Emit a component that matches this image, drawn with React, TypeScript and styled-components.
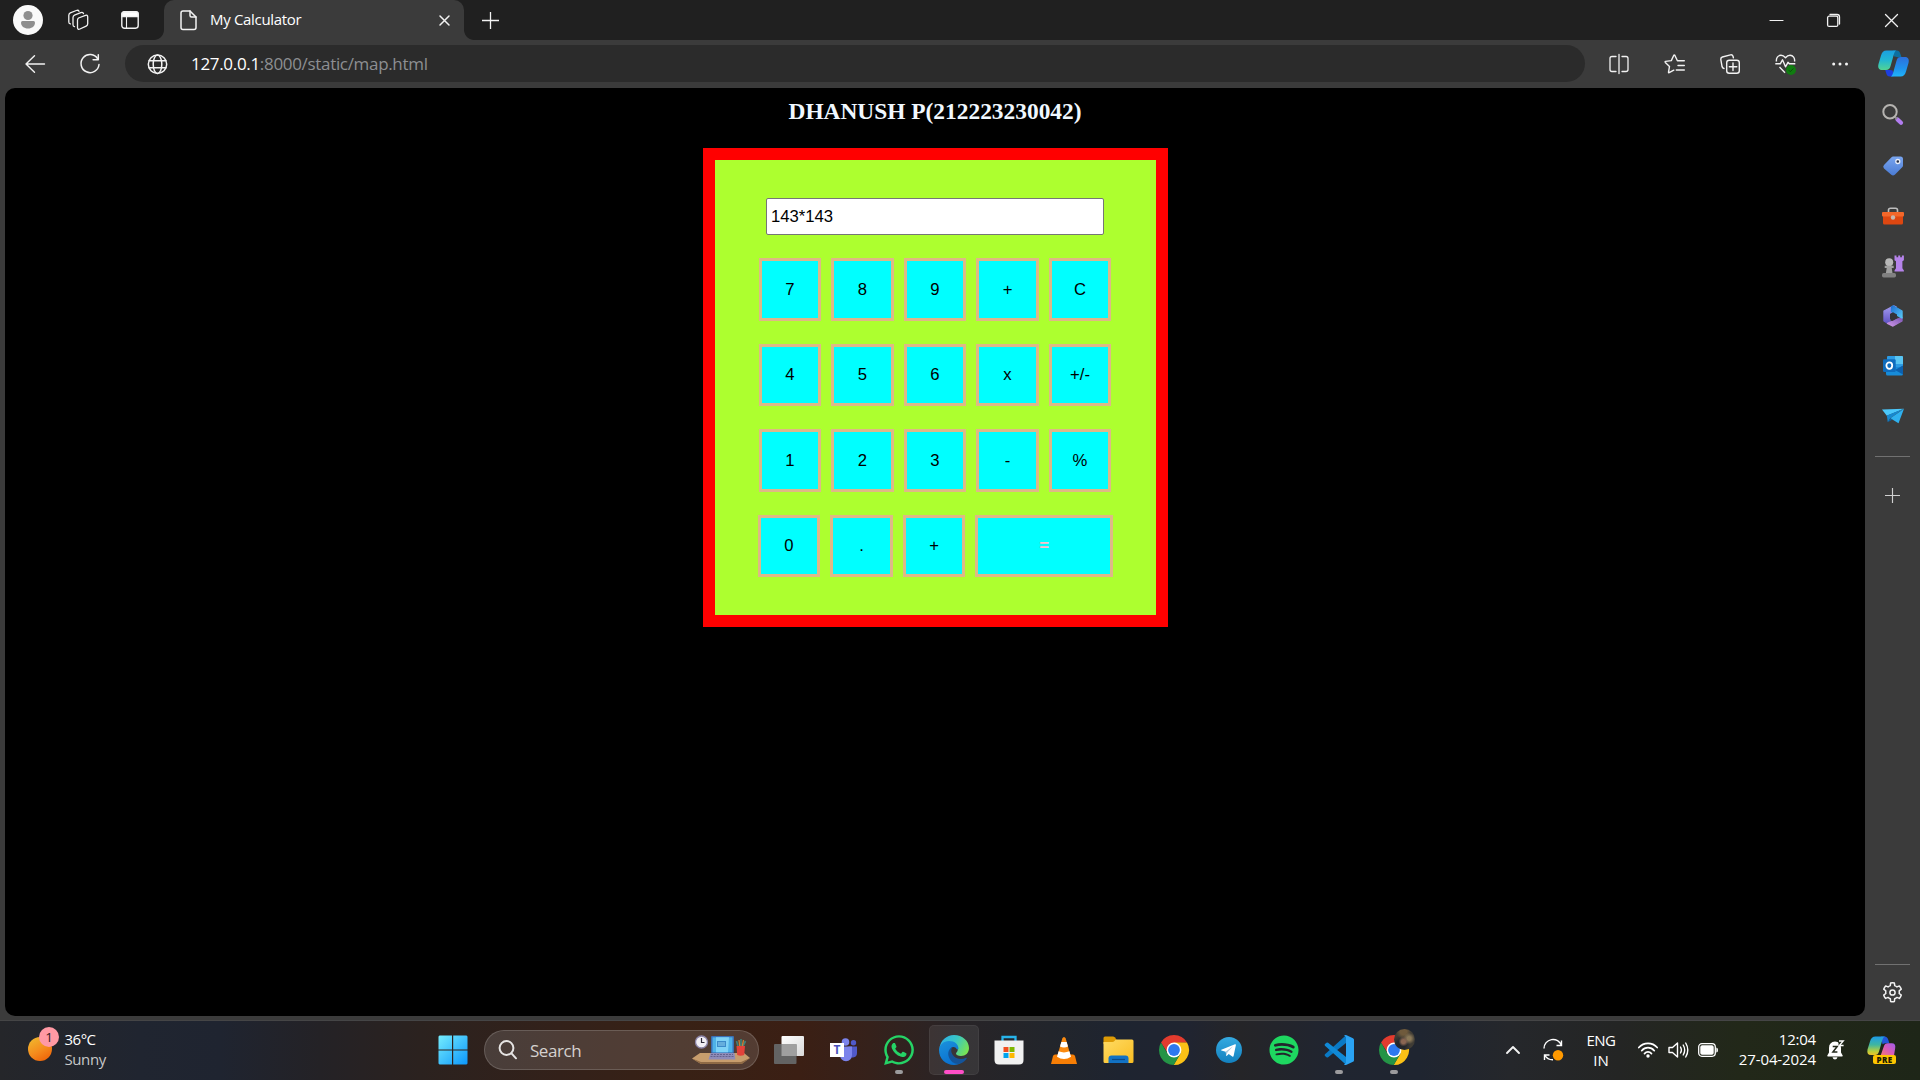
import React from 'react';
import styled, { createGlobalStyle } from 'styled-components';
import { FaWhatsapp, FaSpotify } from 'react-icons/fa';

const GlobalStyle = createGlobalStyle`
  *, *::before, *::after { box-sizing: border-box; }
  html, body { margin: 0; padding: 0; background: #3b3b3b; overflow: hidden; }
  svg { display: block; flex: none; overflow: visible; }
`;

const uiFont = `"Open Sans", "Noto Sans", sans-serif`;

/* ---------- window frame ---------- */

const Desktop = styled.div`
  display: flex;
  flex-direction: column;
  width: 1920px;
  height: 1080px;
  overflow: hidden;
  background: #3b3b3b;
  color: #fff;
  font-family: ${uiFont};
`;

const TitleBar = styled.header`
  display: flex;
  height: 40px;
  flex: none;
  background: #202020;
`;

const Slot = styled.div<{ $w: number; $shift?: number }>`
  display: flex;
  align-items: center;
  justify-content: center;
  flex: none;
  width: ${(p) => p.$w}px;
  height: 100%;
  padding-top: ${(p) => p.$shift ?? 0}px;
`;

const Tab = styled.div`
  position: relative;
  display: flex;
  align-items: center;
  width: 300px;
  height: 40px;
  margin-left: 3px;
  padding: 0 14px 0 16px;
  border-radius: 10px 10px 0 0;
  background: #3b3b3b;

  &::before,
  &::after {
    content: '';
    position: absolute;
    bottom: 0;
    width: 10px;
    height: 10px;
  }
  &::before {
    left: -10px;
    background: radial-gradient(circle at 0 0, #202020 9.5px, #3b3b3b 10.3px);
  }
  &::after {
    right: -10px;
    background: radial-gradient(circle at 100% 0, #202020 9.5px, #3b3b3b 10.3px);
  }
`;

const TabTitle = styled.span`
  flex: 1;
  margin-left: 13px;
  padding-bottom: 2px;
  font-size: 15px;
  line-height: 20px;
  letter-spacing: -0.32px;
`;

const Spacer = styled.div`
  flex: 1;
`;

const Toolbar = styled.div`
  display: flex;
  align-items: center;
  flex: none;
  height: 48px;
  padding-bottom: 1px;
`;

const AddressBar = styled.div`
  display: flex;
  align-items: center;
  width: 1460px;
  height: 37px;
  margin-right: 6px;
  padding-left: 22px;
  border-radius: 19px;
  background: #2b2b2b;
`;

const Url = styled.span`
  margin-left: 24px;
  font-size: 17px;
  line-height: 24px;
  letter-spacing: -0.32px;
  color: #8d8f92;
`;

const Host = styled.span`
  color: #fff;
`;

const Body = styled.div`
  display: flex;
  flex: none;
  height: 932px;
`;

/* ---------- page ---------- */

const Page = styled.main`
  display: flex;
  flex-direction: column;
  align-items: center;
  width: 1860px;
  height: 928px;
  margin-left: 5px;
  padding: 9px 0 0 1px;
  border-radius: 10px;
  background: #000;
`;

const Heading = styled.h3`
  margin: 0 0 23px;
  padding-right: 1px;
  font: bold 23.4px/28px "Liberation Serif", serif;
  color: aliceblue;
`;

const Calculator = styled.section`
  width: 465px;
  height: 479px;
  padding: 38px 0 0 44px;
  border: 12px solid #f00;
  background: greenyellow;
`;

const Display = styled.input`
  display: block;
  width: 338px;
  height: 37px;
  margin: 0 0 23px 7px;
  padding: 0 4px;
  border: 1px solid #767676;
  border-radius: 2px;
  outline: none;
  background: #fff;
  color: #000;
  font: 16.67px "Liberation Sans", sans-serif;
`;

const KeyRow = styled.div<{ $h: number; $wide?: boolean }>`
  display: grid;
  grid-template-columns: ${(p) => (p.$wide ? '62px 63px 62px 138px' : '62px 63px 62px 63px 62px')};
  column-gap: 10px;
  height: ${(p) => p.$h}px;
  margin: 0 0 23px ${(p) => (p.$wide ? -1 : 0)}px;
`;

const Key = styled.button<{ $equals?: boolean }>`
  display: flex;
  align-items: center;
  justify-content: center;
  padding: 0;
  border: 3px solid burlywood;
  border-radius: 0;
  background: aqua;
  color: ${(p) => (p.$equals ? 'pink' : '#000')};
  font: ${(p) => (p.$equals ? 'bold' : 'normal')} 16.67px "Liberation Sans", sans-serif;
`;

/* ---------- sidebar ---------- */

const Sidebar = styled.aside`
  display: flex;
  flex-direction: column;
  align-items: center;
  width: 55px;
  padding: 3px 0 3px;
`;

const SideItem = styled.div<{ $lift?: boolean }>`
  display: flex;
  align-items: center;
  justify-content: center;
  height: 50px;
  padding-bottom: ${(p) => (p.$lift ? 2 : 0)}px;
`;

const Divider = styled.hr<{ $before: number; $after: number }>`
  width: 35px;
  height: 1px;
  margin: ${(p) => p.$before}px 0 ${(p) => p.$after}px;
  border: 0;
  background: #717171;
`;

/* ---------- taskbar ---------- */

const Taskbar = styled.footer`
  display: flex;
  align-items: center;
  flex: none;
  height: 60px;
  padding-bottom: 1px;
  border-top: 1px solid #454546;
  background: linear-gradient(
    90deg,
    #25262a 0,
    #202530 140px,
    #1f2430 220px,
    #242226 320px,
    #2b221f 420px,
    #33211a 560px,
    #382115 680px,
    #3b1f14 800px,
    #35211b 870px,
    #282427 960px,
    #22252b 1050px,
    #1e2430 1120px,
    #202430 1190px,
    #252528 1240px,
    #202530 1330px,
    #1f2530 1420px,
    #25272b 1510px,
    #242524 1620px,
    #222819 1740px,
    #1e2618 1920px
  );
`;

const Lines = styled.div<{ $align: string; $w: number; $drop?: number }>`
  width: ${(p) => p.$w}px;
  margin-top: ${(p) => -2 + 2 * (p.$drop ?? 0)}px;
  text-align: ${(p) => p.$align};
  font-size: 15px;
  line-height: 20px;
  white-space: nowrap;
`;

const Line = styled.div<{ $ls: number; $dim?: boolean }>`
  letter-spacing: ${(p) => p.$ls}px;
  color: ${(p) => (p.$dim ? '#c8c8c9' : '#fff')};
`;

const Weather = styled.div`
  display: flex;
  align-items: center;
  width: 425px;
  padding-left: 28px;
`;

const SunBox = styled.div`
  position: relative;
  width: 24px;
  height: 24px;
  margin: 0 12.5px 3px 0;
  border-radius: 50%;
  background: linear-gradient(150deg, #efb92f 5%, #f58a1c 55%, #ee6409 90%);
`;

const CountBadge = styled.span`
  position: absolute;
  left: 11px;
  top: -10px;
  width: 20px;
  height: 20px;
  border-radius: 50%;
  background: #ff99a4;
  color: #33191c;
  font-size: 13.5px;
  line-height: 20px;
  text-align: center;
`;

const SearchBox = styled.div`
  display: flex;
  align-items: center;
  width: 275px;
  height: 40px;
  margin-left: 4px;
  margin-right: 2px;
  padding: 0 8px 0 13px;
  border: 1px solid rgba(255, 255, 255, 0.16);
  border-radius: 20px;
  background: rgba(255, 255, 255, 0.13);
`;

const SearchText = styled.span`
  flex: 1;
  margin-left: 13px;
  padding-top: 2px;
  font-size: 17px;
  line-height: 24px;
  letter-spacing: -0.45px;
  color: #d5d1cf;
`;

const AppSlot = styled.div<{ $active?: boolean }>`
  position: relative;
  display: flex;
  align-items: center;
  justify-content: center;
  flex: none;
  width: ${(p) => (p.$active ? 50 : 55)}px;
  height: 50px;
  margin: 0 ${(p) => (p.$active ? 2.5 : 0)}px;
  border-radius: 5px;
  background: ${(p) => (p.$active ? 'rgba(255,255,255,0.08)' : 'transparent')};
  box-shadow: ${(p) => (p.$active ? 'inset 0 0 0 1px rgba(255,255,255,0.05)' : 'none')};
`;

const Running = styled.i<{ $focused?: boolean }>`
  position: absolute;
  left: 50%;
  bottom: 1px;
  width: ${(p) => (p.$focused ? 20 : 8)}px;
  height: 4px;
  transform: translateX(-50%);
  border-radius: 2px;
  background: ${(p) => (p.$focused ? '#ff4fc8' : '#9b9b9d')};
`;

/* ---------- icons ---------- */

const LineIcon = ({ w, h, sw = 1.4, children }: { w: number; h: number; sw?: number; children: React.ReactNode }) => (
  <svg width={w} height={h} viewBox={`0 0 ${w} ${h}`} fill="none" stroke="#f2f2f2" strokeWidth={sw} strokeLinecap="round" strokeLinejoin="round">
    {children}
  </svg>
);

const ProfileIcon = () => (
  <svg width="30" height="30" viewBox="0 0 30 30">
    <circle cx="15" cy="15" r="15" fill="#fafafa" />
    <circle cx="15" cy="10.5" r="4.6" fill="#8f8f8f" />
    <path d="M9.5 16h11q1.500 0 1.500 1.600c0 3.800-3 6-7 6s-7-2.200-7-6Q8 16 9.500 16z" fill="#8f8f8f" />
  </svg>
);

const WorkspacesIcon = () => (
  <LineIcon w={22} h={22} sw={1.3}>
    <path d="M11.500 9l7-2.700q2-.6 2.200 1.400v7q0 1.700-1.500 2.400l-6.300 2.900q-2.200 1-2.400-1.300v-7.400q0-1.600 1-2.300z" />
    <path d="M7.500 17.700q-1.500-.1-1.500-1.900V8.600q0-1.700 1.500-2.400l6.300-2.500q2.200-.8 2.700 1" />
    <path d="M3.400 14.900q-1.600-.2-1.600-2V6.200q0-1.600 1.500-2.300l6-2.400q2-.8 2.700.8" />
  </LineIcon>
);

const TabActionsIcon = () => (
  <LineIcon w={18} h={18}>
    <rect x=".8" y=".8" width="16.400" height="16.400" rx="2.600" />
    <path d="M1 5.500V3q0-2 2-2h12q2 0 2 2v2.500z" fill="#fff" />
    <path d="M5.500 5.500V17" strokeWidth="1.100" />
  </LineIcon>
);

const FileIcon = () => (
  <LineIcon w={17} h={21} sw={1.5}>
    <path d="M3 1h7l6 6v10.500q0 2-2 2H3q-2 0-2-2V3q0-2 2-2z" />
    <path d="M10 1v4.500q0 1.500 1.500 1.500H16" />
  </LineIcon>
);

const CloseSmall = () => (
  <LineIcon w={11} h={11} sw={1.5}>
    <path d="M1 1l9 9M10 1l-9 9" />
  </LineIcon>
);

const PlusIcon = ({ s = 17, c = '#f2f2f2' }: { s?: number; c?: string }) => (
  <svg width={s} height={s} viewBox="0 0 17 17" fill="none" stroke={c} strokeWidth="1.3">
    <path d="M8.500 0v17M0 8.500h17" />
  </svg>
);

const BackIcon = () => (
  <LineIcon w={20} h={18}>
    <path d="M9.500 .7L1 9l8.500 8.300M1 9h18.500" />
  </LineIcon>
);

const RefreshIcon = () => (
  <LineIcon w={20} h={20} sw={1.5}>
    <path d="M17.800 5A9 9 0 1 0 19 10.500" />
    <path d="M18.300 .8v5h-5.200" />
  </LineIcon>
);

const GlobeIcon = () => (
  <LineIcon w={20} h={20} sw={1.5}>
    <circle cx="10.500" cy="10.300" r="9.200" />
    <ellipse cx="10.500" cy="10.300" rx="4.300" ry="9.200" />
    <path d="M2.100 6.800h16.800M2.100 13.800h16.800" />
  </LineIcon>
);

const SplitIcon = () => (
  <LineIcon w={20} h={20} sw={1.3}>
    <path d="M7 2.500H3q-2 0-2 2v11q0 2 2 2h4M13 2.500h4q2 0 2 2v11q0 2-2 2h-4M10 .5v19" />
  </LineIcon>
);

const FavoritesIcon = () => (
  <LineIcon w={21} h={20}>
    <path d="M9.800 16.200L5.200 18.700q-.8.300-.7-.6l1-5.700-4.200-4q-.6-.8.300-1l5.700-.8L9.800 1.200q.5-.7 1 0L13.400 6.700h6.900M14 11.500h6.300M12.300 16h8" />
  </LineIcon>
);

const CollectionsIcon = () => (
  <LineIcon w={20} h={20}>
    <path d="M4 14.500q-1.500-.2-1.900-1.700L.8 5.500q-.3-1.900 1.500-2.500L10.500.9q1.900-.4 2.500 1.400l.4 1.500" />
    <rect x="6.700" y="6.200" width="12.600" height="13" rx="2.500" />
    <path d="M13 9v7.500M9.300 12.700h7.500" />
  </LineIcon>
);

const HealthIcon = () => (
  <svg width="21" height="21" viewBox="0 0 21 21" fill="none" stroke="#f2f2f2" strokeWidth="1.400" strokeLinejoin="round">
    <path d="M1.500 7.500C.8 4 3 1.300 6 1.300q2.500 0 4.500 2.400 2-2.400 4.500-2.400c3 0 5.200 2.700 4.500 6.200M4.500 13l5.500 5.700" />
    <path d="M.3 9.800h5l2.200-4 3 7 2.500-4.500 1.300 1.500h6" />
    <circle cx="16" cy="16" r="5" fill="#107c10" stroke="none" />
    <path d="M13.800 16.200l1.500 1.500 3-3.200" stroke="#0a4d0a" strokeWidth="1" />
  </svg>
);

const DotsIcon = () => (
  <svg width="16" height="4" viewBox="0 0 16 4" fill="#f5f5f5">
    <circle cx="1.700" cy="2" r="1.500" /><circle cx="8" cy="2" r="1.500" /><circle cx="14.500" cy="2" r="1.500" />
  </svg>
);

const CopilotIcon = () => (
  <svg width="31" height="27" viewBox="0 0 31 27">
    <defs>
      <linearGradient id="cpA" x1="0" y1="0" x2="0" y2="1">
        <stop offset="0" stopColor="#1b9fe0" /><stop offset=".5" stopColor="#22b7d2" /><stop offset="1" stopColor="#52d493" />
      </linearGradient>
      <linearGradient id="cpB" x1="0" y1="0" x2="0" y2="1">
        <stop offset="0" stopColor="#2d6fdc" /><stop offset=".6" stopColor="#1f93ec" /><stop offset="1" stopColor="#20b4fb" />
      </linearGradient>
    </defs>
    <path d="M15 .5h3.500c2.600 0 3.300 1.500 4.100 4l.9 2.700h-3.800c-1.500 0-2.500-.7-3.700-.7z" fill="#0d6f9f" />
    <path d="M15.500 26.500H12c-2.600 0-3.300-1.500-4-4L7.200 20H11c1.500 0 2.500.4 3.700.4z" fill="#1d3fe0" />
    <path d="M8.500.5h9.800c-1.300.6-1.900 2-2.400 3.800l-3.400 12C11.700 19 10.500 20 8 20H4C.8 20-.4 17.500.5 14L3 5.500C4 2 5.500.5 8.500.5z" fill="url(#cpA)" />
    <path d="M22.500 26.500h-9.800c1.300-.6 1.900-2 2.400-3.800l3.400-12C19.300 8 20.500 7 23 7h4c3.200 0 4.400 2.500 3.500 6L28 21.500c-1 3.500-2.500 5-5.500 5z" fill="url(#cpB)" />
  </svg>
);

const SideSearchIcon = () => (
  <svg width="22" height="22" viewBox="0 0 22 22">
    <path d="M15.500 15.500l3.500 3.300" stroke="#b27df0" strokeWidth="4.200" strokeLinecap="round" />
    <path d="M12.500 12.500l2.500 2.500" stroke="#8c8c8c" strokeWidth="2" />
    <circle cx="8" cy="7.800" r="6.700" fill="none" stroke="#b5b3b0" strokeWidth="2" />
  </svg>
);

const TagIcon = () => (
  <svg width="20" height="20" viewBox="0 0 20 20">
    <defs><linearGradient id="tg" x1="0" y1="0" x2="0" y2="1"><stop offset="0" stopColor="#79a5ef" /><stop offset="1" stopColor="#4a7bd4" /></linearGradient></defs>
    <path d="M10 .5h7.500Q20 .5 20 3v6.500q0 1-.8 1.800l-7.400 7.500q-1.800 1.600-3.500 0L1 12.500q-1.600-1.700 0-3.400l7.500-7.800Q9.200.5 10 .5z" fill="url(#tg)" />
    <circle cx="14.800" cy="5.500" r="2" fill="#26314a" stroke="#e8edf8" strokeWidth="1.300" />
  </svg>
);

const ToolboxIcon = () => (
  <svg width="22" height="18" viewBox="0 0 22 18">
    <path d="M6.500 5V3q0-1.800 2-1.800h5q2 0 2 1.800v2" fill="none" stroke="#bdbdbd" strokeWidth="1.600" />
    <rect x="1" y="5" width="20" height="12.500" rx="1.500" fill="#dd4711" />
    <rect x="0" y="5" width="22" height="4.500" rx="1" fill="#f3672a" />
    <circle cx="11" cy="10.500" r="2.200" fill="#c7b8b0" />
  </svg>
);

const ChessIcon = () => (
  <svg width="22" height="23" viewBox="0 0 22 23">
    <path d="M12.500.5h2v1.800h1.700V.5h2v1.800h1.700V.5h2v4.700l-1.500 1v7l1.500 2.300v1h-9.400v-1l1.500-2.300v-7l-1.500-1z" fill="#b583ea" />
    <circle cx="7.200" cy="7.200" r="4" fill="#b8b8b8" />
    <path d="M2.700 10.800h9v2.200H9.700l.8 5H3.900l.8-5h-2z" fill="#a0a0a0" />
    <rect x="0" y="18" width="14" height="4.500" rx="1.700" fill="#808080" />
  </svg>
);

const M365Icon = () => (
  <svg width="20" height="22" viewBox="0 0 20 22" strokeLinejoin="round">
    <defs>
      <linearGradient id="m1" x1="0" y1="0" x2="0" y2="1"><stop offset="0" stopColor="#a49cf0" /><stop offset="1" stopColor="#5f52c4" /></linearGradient>
      <linearGradient id="m2" x1="0" y1="0" x2="1" y2="1"><stop offset="0" stopColor="#1f70d2" /><stop offset="1" stopColor="#57c8f6" /></linearGradient>
      <linearGradient id="m3" x1="0" y1="1" x2="1" y2="0"><stop offset="0" stopColor="#cf97e8" /><stop offset="1" stopColor="#7a55b4" /></linearGradient>
    </defs>
    <path d="M10.500 1L1 6v10l4 2.400L7 17V8.500L13 5V2z" fill="url(#m1)" stroke="url(#m1)" strokeWidth="1.400" />
    <path d="M19 12.500V16l-9 5-5.500-2.700L13.800 14.300z" fill="url(#m3)" stroke="url(#m3)" strokeWidth="1.400" />
    <path d="M10.500 1L19 6v7l-5.500-3L8.500 6.500V2z" fill="url(#m2)" stroke="url(#m2)" strokeWidth="1.400" />
    <path d="M10 7.300l4 2.200v3.800L9.500 16 7 14V9z" fill="#343338" />
  </svg>
);

const OutlookIcon = () => (
  <svg width="20" height="20" viewBox="0 0 20 20">
    <path d="M5 0h13q2 0 2 2v8L12 14 4 8V1q0-1 1-1z" fill="#2c9be4" />
    <path d="M12 0h7q1 0 1 1v7h-8z" fill="#58c5f3" />
    <path d="M3 11h16.500l.5-1v8q0 1.500-1.500 1.500h-14Q3 19.500 3 18z" fill="#178cd9" />
    <path d="M20 9.500v9L12 14z" fill="#0c60ae" />
    <rect x="0" y="3.300" width="12.700" height="12.700" rx="1.200" fill="#0f6cbd" />
    <ellipse cx="6.300" cy="9.600" rx="2.900" ry="3.300" fill="none" stroke="#fff" strokeWidth="1.800" />
  </svg>
);

const DropIcon = () => (
  <svg width="22" height="16" viewBox="0 0 22 16">
    <path d="M0 1.500L22 .7 4.800 7.800Z" fill="#4bc8fb" />
    <path d="M21.700 .7L4.800 7.500l1 6.700 2.500-4z" fill="#1688cf" />
    <path d="M22 0.700L8.300 10.200l8.200 5z" fill="#2fb1ef" />
    <path d="M8.300 10.200l-2.500 4 4.700-2.600z" fill="#0d62a0" />
  </svg>
);

const GearIcon = () => (
  <LineIcon w={21} h={21} sw={1.5}>
    <path d="M8.300 3.600L8.600 1q1.900-.5 3.800 0l.3 2.600q1.300.5 2.300 1.300l2.400-1q1.300 1.400 1.900 3.300l-2.100 1.600q.2 1.400 0 2.700l2.100 1.600q-.6 1.900-1.900 3.300l-2.400-1q-1 .8-2.300 1.300l-.3 2.800q-1.900.5-3.800 0l-.3-2.800q-1.300-.5-2.300-1.300l-2.400 1q-1.300-1.400-1.900-3.300l2.100-1.600q-.2-1.300 0-2.700L1.700 7.200q.6-1.900 1.900-3.300l2.400 1q1-.8 2.300-1.300z" />
    <circle cx="10.500" cy="10.500" r="2.600" />
  </LineIcon>
);

const WindowsIcon = () => (
  <svg width="30" height="30" viewBox="0 0 30 30">
    <defs><linearGradient id="win" gradientUnits="userSpaceOnUse" x1="0" y1="0" x2="30" y2="30"><stop offset="0" stopColor="#77eefd" /><stop offset="1" stopColor="#0a95fb" /></linearGradient></defs>
    <path d="M1.500.5H14v14H.5v-13zM15.200.5h13.300l1 1v13H15.200zM.5 15.600H14v14H1.500l-1-1zM15.200 15.600h14.300v13l-1 1H15.200z" fill="url(#win)" />
  </svg>
);

const LensIcon = () => (
  <svg width="19" height="20" viewBox="0 0 19 20" fill="none" stroke="#e6e4e3" strokeWidth="2" strokeLinecap="round">
    <circle cx="8.500" cy="8" r="6.900" /><path d="M13.500 13.300l4.500 5" />
  </svg>
);

const DeskIcon = () => (
  <svg width="58" height="30" viewBox="0 0 58 30">
    <path d="M8 18h44l6 5-9 6H9l-9-5.500z" fill="#c79d6d" />
    <path d="M0 23.500L9 27h40l9-4-8 6H9z" fill="#8f6a45" />
    <circle cx="9.500" cy="7" r="6" fill="#f1eef4" stroke="#8b84a8" strokeWidth="1.300" />
    <path d="M9.500 3v4.500h3" fill="none" stroke="#2e2b3a" strokeWidth="1.200" />
    <rect x="19" y="1" width="23" height="17" rx="1" fill="#3b6fb5" /><rect x="20.500" y="2.300" width="20" height="15" fill="#4fb2e8" />
    <path d="M24 2.300h13l-1 15H24z" fill="#7fd2f6" /><rect x="25" y="6" width="9" height="6" fill="#3c8bca" /><path d="M26 8h7M26 10h7" stroke="#8fd0ef" />
    <path d="M18.500 18h24l.8 6.500H16.500z" fill="#8f8cb8" /><path d="M19 19.500h22M18.500 21.500h23" stroke="#65628e" strokeWidth="1" strokeDasharray="2 1" />
    <path d="M46 11l-1.500-5M49 11V4M51 11l2.500-5" stroke="#3f7f79" strokeWidth="1.700" /><path d="M47.700 11l-.7-6M50.300 11l1.200-6" stroke="#c98238" strokeWidth="1.300" />
    <path d="M44.500 11h8.500l-.8 9q-3.500 1.500-7 0z" fill="#e3423a" />
  </svg>
);

const TaskViewIcon = () => (
  <svg width="30" height="28" viewBox="0 0 30 28">
    <defs><linearGradient id="tv" x1="0" y1="0" x2="1" y2="1"><stop offset="0" stopColor="#fff" /><stop offset="1" stopColor="#d8d8d8" /></linearGradient></defs>
    <rect x="7.500" y="0" width="22.500" height="20" rx="1" fill="url(#tv)" />
    <rect x="0" y="8" width="22.500" height="20" rx="1" fill="#636363" />
    <path d="M7.500 8h15v12h-15z" fill="#9f9f9f" />
  </svg>
);

const TeamsLetter = styled.span`
  position: absolute;
  left: 14px;
  top: 18px;
  width: 14px;
  height: 14px;
  background: #fff;
  color: #4b53bc;
  font-size: 12px;
  font-weight: 700;
  line-height: 14px;
  text-align: center;
`;

const TeamsIcon = () => (
  <svg width="26" height="24" viewBox="0 0 26 24">
    <circle cx="22.500" cy="4.800" r="2.700" fill="#5059c9" /><path d="M17.500 8.500H26V15q0 4-4 4.500h-4.500z" fill="#5059c9" />
    <circle cx="14.500" cy="4" r="3.800" fill="#7b83eb" /><path d="M9 8.500h12V17q-.5 6-6 6.300Q9.500 23 9 17z" fill="#7b83eb" />
  </svg>
);

const EdgeIcon = () => (
  <svg width="30" height="30" viewBox="0 0 30 30">
    <defs>
      <linearGradient id="e1" x1="0" y1=".2" x2="1" y2=".6"><stop offset="0" stopColor="#2cafe8" /><stop offset=".5" stopColor="#39c6c4" /><stop offset="1" stopColor="#78e354" /></linearGradient>
      <linearGradient id="e2" x1="0" y1="0" x2=".5" y2="1"><stop offset="0" stopColor="#1b92dc" /><stop offset="1" stopColor="#0a70cf" /></linearGradient>
    </defs>
    <path d="M.5 13C1.500 5.500 7.500 0 15 0c8.500 0 15 6 15 13 0 5-3.500 8-8 8-3 0-5-1-5-2.500 0-1 1.800-1.500 1.800-4C18.800 11 15 8 10 8 5.500 8 2 10 .5 13z" fill="url(#e1)" />
    <path d="M0 15c0-5 4.500-9 10-9 6 0 9.500 3.500 9.500 8l-1.500.5c-1-2-2.500-2.700-4-2.500-3 .5-3.500 5-1.500 9 2 3.500 6 6 11 5.500C21 29 18 30 15 30 6.500 30 0 23.500 0 15z" fill="url(#e2)" />
    <path d="M14 11.800c-4 1.500-5.500 5.700-4.300 9.700 1.500 5 6 8 11 7.300 3-.7 5.500-3 7-5.300.3-.7-.3-1-.8-.7-4 2-9 1.500-12-1.500-3-3-3.600-7-.9-9.500z" fill="#14549a" />
  </svg>
);

const StoreIcon = () => (
  <svg width="30" height="30" viewBox="0 0 30 30">
    <path d="M8.500 6V2h13v4" fill="none" stroke="#27b3ea" strokeWidth="2.300" />
    <path d="M.5 5.500h29V25q0 4.500-4.500 4.500H5Q.5 29.500.5 25z" fill="#f1f1f1" />
    <path d="M9.500 12h5v5h-5z" fill="#f04e1f" /><path d="M15.500 12h5v5h-5z" fill="#7db700" /><path d="M9.500 18h5v5h-5z" fill="#00a3ee" /><path d="M15.500 18h5v5h-5z" fill="#fdb800" />
  </svg>
);

const ConeIcon = () => (
  <svg width="26" height="27" viewBox="0 0 26 27">
    <path d="M4 17.500h18q1.500 0 2 1.500l2 8H0l2-8q.5-1.500 2-1.500z" fill="#f77e05" />
    <path d="M13 0q1.200 0 1.700 1.500L20 20q-7 5-14 0l5.300-18.500Q11.800 0 13 0z" fill="#fa8a10" />
    <path d="M10.300 5h5.400l1.300 4.500q-4 2-8 0zM7.600 14.300q5.400 2.300 10.800 0l1.600 5.500q-7 4.500-14 0z" fill="#fff" />
  </svg>
);

const FolderIcon = () => (
  <svg width="31" height="28" viewBox="0 0 31 28">
    <defs><linearGradient id="fo" x1="0" y1="0" x2="1" y2="1"><stop offset="0" stopColor="#ffdb63" /><stop offset="1" stopColor="#f9bd22" /></linearGradient></defs>
    <path d="M.5 2q0-1.500 1.500-1.500h8q1 0 1.700.7L13.500 3.500V8H.5z" fill="#dd9b05" />
    <path d="M.5 6h9q1 0 1.700-.8L12.300 4q.6-.5 1.700-.5H29q1.500 0 1.500 1.500V25.500q0 1.500-1.500 1.500H2Q.5 27 .5 25.500z" fill="url(#fo)" />
    <path d="M5.500 27v-4.500q0-3 3-3h14q3 0 3 3V27z" fill="#1272c4" /><path d="M9 23.500h13" stroke="#0b4a88" strokeWidth="1.200" />
  </svg>
);

const ChromeIcon = () => (
  <svg width="30" height="30" viewBox="0 0 30 30">
    <path d="M2 7.500A15 15 0 0 1 28 7.500L15 8 9 18.500z" fill="#e33b2e" />
    <path d="M28 7.500A15 15 0 0 1 14.700 30L21.500 18.500 15 7.500z" fill="#fbc116" />
    <path d="M2 7.500A15 15 0 0 0 14.700 30L21.200 19 15 15 8.500 18.500z" fill="#249446" />
    <circle cx="15" cy="15" r="7.400" fill="#fff" /><circle cx="15" cy="15" r="5.900" fill="#2d78ee" />
  </svg>
);

const TelegramIcon = () => (
  <svg width="26" height="26" viewBox="0 0 26 26">
    <defs><linearGradient id="tel" x1="0" y1="0" x2="0" y2="1"><stop offset="0" stopColor="#35aae1" /><stop offset="1" stopColor="#1381bf" /></linearGradient></defs>
    <circle cx="13" cy="13" r="13" fill="url(#tel)" />
    <path d="M5.300 12.700L19 7.200q1-.3.900.8l-2.300 11q-.3 1.200-1.300.6l-3.600-2.600-1.800 1.800q-.6.500-.7-.4l-.5-3.700-4.300-1.300q-.7-.3-.1-.7z" fill="#fff" />
    <path d="M10.200 18.500l-.4-4L17 9.300l-5.500 6z" fill="#a9c9de" />
  </svg>
);

const VsCodeIcon = () => (
  <svg width="30" height="30" viewBox="0 0 30 30">
    <path d="M22 .3L1 19.300q-.8.800 0 1.600l1.500 1.400q.8.600 1.600 0L22 8z" fill="#0a79c4" />
    <path d="M22 29.700L1 10.700q-.8-.8 0-1.600l1.500-1.400q.8-.6 1.600 0L22 22z" fill="#1089d6" />
    <path d="M22 0l7 3.200q1 .5 1 1.600v20.400q0 1.100-1 1.600L22 30q-1 .3-2-.6l2-1.400V2l-2-1.400Q21-.2 22 0z" fill="#2aa3f3" />
  </svg>
);

const Photo = styled.span`
  position: absolute;
  left: 28px;
  top: 4px;
  width: 21px;
  height: 21px;
  border-radius: 50%;
  background:
    radial-gradient(circle at 45% 60%, #8a6652 0 12%, transparent 28%),
    radial-gradient(circle at 72% 45%, #8b7958 0 10%, transparent 30%),
    radial-gradient(circle at 45% 12%, #6f5a3c 0 15%, transparent 35%),
    radial-gradient(circle at 30% 80%, #23262a 0 20%, transparent 45%),
    #3f3c35;
`;

const CloudSyncIcon = () => (
  <svg width="20" height="21" viewBox="0 0 20 21" fill="none" stroke="#fff" strokeWidth="1.400">
    <path d="M1 8.500A9 9 0 0 1 18.500 5.500M18.500.5v5h-5M10 19.800A9 9 0 0 1 1.800 15M1.500 20v-5h5" />
    <circle cx="15" cy="15.300" r="5.200" fill="#ff9900" stroke="none" />
  </svg>
);

const WifiIcon = () => (
  <svg width="20" height="16" viewBox="0 0 20 16" fill="none" stroke="#fff" strokeWidth="1.700" strokeLinecap="round">
    <path d="M.8 5.500Q4.500 1.300 10 1.300t9.200 4.200M3.700 8.700Q6.300 5.700 10 5.700t6.300 3M6.500 11.600Q8 9.800 10 9.800t3.500 1.800" />
    <circle cx="10" cy="14" r="1.700" fill="#fff" stroke="none" />
  </svg>
);

const VolumeIcon = () => (
  <svg width="21" height="18" viewBox="0 0 21 18" fill="none" stroke="#fff" strokeWidth="1.400" strokeLinecap="round" strokeLinejoin="round">
    <path d="M1 6.500h3.500L9.500 2v14l-5-4.500H1zM12.500 6q1.800 3 0 6M15.200 4q3 5 0 10M17.700 2q4.200 7 0 14" />
  </svg>
);

const BatteryIcon = () => (
  <svg width="20" height="14" viewBox="0 0 20 14">
    <rect x=".7" y=".7" width="16.600" height="12.600" rx="3.200" fill="none" stroke="#fff" strokeWidth="1.300" />
    <rect x="2.300" y="2.300" width="13.400" height="9.400" rx="1.800" fill="#fff" /><path d="M18.300 4.500q1.700 0 1.700 2.500t-1.700 2.500z" fill="#fff" />
  </svg>
);

const BellIcon = () => (
  <svg width="17" height="20" viewBox="0 0 17 20">
    <path d="M8 1.500q6 .5 6 6.500v4.500l1.700 3q.2 1-.7 1H1q-.9 0-.7-1l1.700-3V8q0-6 6-6.500zM5.500 17.300h5q-.6 2.200-2.500 2.200t-2.500-2.200z" fill="#fff" />
    <path d="M5.700 6.500h4.500l-4.300 5.500h4.500" fill="none" stroke="#23291c" strokeWidth="1.500" />
    <path d="M11.500.8h5v5h-5z" fill="#20281a" />
    <path d="M12 1h4.300l-4 4.500h4.300" fill="none" stroke="#fff" strokeWidth="1.300" />
  </svg>
);

const CopilotColor = () => (
  <svg width="29" height="28" viewBox="0 0 29 28">
    <defs>
      <linearGradient id="cc1" x1="0" y1="0" x2="0" y2="1"><stop offset="0" stopColor="#1c9be8" /><stop offset=".45" stopColor="#3fb6a0" /><stop offset=".8" stopColor="#b9cf3c" /><stop offset="1" stopColor="#efc229" /></linearGradient>
      <linearGradient id="cc2" x1="1" y1="0" x2="0" y2="1"><stop offset="0" stopColor="#9f5cec" /><stop offset=".5" stopColor="#d85bb8" /><stop offset="1" stopColor="#f77e6c" /></linearGradient>
    </defs>
    <path d="M14 .5h3.500q3 0 4 4l.8 2.700H19q-2 0-3.500 1z" fill="#2356d8" />
    <path d="M8.500.5h9.500q-2 .7-2.800 4L12 15.500Q11 19 8 19H4Q-.5 19 .5 13.500L3 5.500Q4.300.5 8.500.5z" fill="url(#cc1)" />
    <path d="M13.500 20l3.300-9.500q1-3.300 4-3.300h4Q29 7.200 28.200 12L27 19.500H17z" fill="url(#cc2)" />
  </svg>
);

const CopilotWrap = styled.div`
  position: relative;
  width: 29px;
  height: 28px;
`;

const Pre = styled.span`
  position: absolute;
  left: 6px;
  top: 19px;
  width: 23px;
  height: 9px;
  border-radius: 2px;
  background: #fdc500;
  color: #201a00;
  font-size: 8px;
  font-weight: 800;
  line-height: 9.5px;
  letter-spacing: 0.3px;
  text-align: center;
`;

const rows: { h: number; keys: string[] }[] = [
  { h: 63, keys: ['7', '8', '9', '+', 'C'] },
  { h: 62, keys: ['4', '5', '6', 'x', '+/-'] },
  { h: 63, keys: ['1', '2', '3', '-', '%'] },
  { h: 62, keys: ['0', '.', '+', '='] },
];

const sideIcons = [SideSearchIcon, TagIcon, ToolboxIcon, ChessIcon, M365Icon, OutlookIcon, DropIcon];

export default function App() {
  return (
    <Desktop>
      <GlobalStyle />
      <TitleBar>
        <Slot $w={56}><ProfileIcon /></Slot>
        <Slot $w={43}><WorkspacesIcon /></Slot>
        <Slot $w={62}><TabActionsIcon /></Slot>
        <Tab>
          <FileIcon />
          <TabTitle>My Calculator</TabTitle>
          <CloseSmall />
        </Tab>
        <Slot $w={53}><PlusIcon /></Slot>
        <Spacer />
        <Slot $w={57}><LineIcon w={13} h={1} sw={1.2}><path d="M0 .5h13" /></LineIcon></Slot>
        <Slot $w={57}>
          <LineIcon w={13} h={13} sw={1.3}>
            <rect x=".6" y="2.200" width="10.200" height="10.200" rx="1.500" />
            <path d="M3 .5h7q2.500 0 2.500 2.500v7" />
          </LineIcon>
        </Slot>
        <Slot $w={58}><LineIcon w={13} h={13} sw={1.3}><path d="M.5.5l12 12M12.500.5l-12 12" /></LineIcon></Slot>
      </TitleBar>

      <Toolbar>
        <Slot $w={70}><BackIcon /></Slot>
        <Slot $w={40}><RefreshIcon /></Slot>
        <Slot $w={15} />
        <AddressBar>
          <GlobeIcon />
          <Url><Host>127.0.0.1</Host>:8000/static/map.html</Url>
        </AddressBar>
        <Slot $w={56}><SplitIcon /></Slot>
        <Slot $w={55}><FavoritesIcon /></Slot>
        <Slot $w={56}><CollectionsIcon /></Slot>
        <Slot $w={54} $shift={2}><HealthIcon /></Slot>
        <Slot $w={56}><DotsIcon /></Slot>
        <Slot $w={50}><CopilotIcon /></Slot>
      </Toolbar>

      <Body>
        <Page>
          <Heading>DHANUSH P(212223230042)</Heading>
          <Calculator>
            <Display defaultValue="143*143" readOnly />
            {rows.map((row, r) => (
              <KeyRow key={r} $h={row.h} $wide={row.keys.length === 4}>
                {row.keys.map((k) => (
                  <Key key={k} $equals={k === '='}>{k}</Key>
                ))}
              </KeyRow>
            ))}
          </Calculator>
        </Page>
        <Sidebar>
          {sideIcons.map((Icon, i) => (
            <SideItem key={i} $lift={i === 0}><Icon /></SideItem>
          ))}
          <Divider $before={15} $after={14} />
          <SideItem $lift><PlusIcon s={15} c="#d0d0d0" /></SideItem>
          <Spacer />
          <Divider $before={0} $after={2} />
          <SideItem><GearIcon /></SideItem>
        </Sidebar>
      </Body>

      <Taskbar>
        <Weather>
          <SunBox><CountBadge>1</CountBadge></SunBox>
          <Lines $align="left" $w={60}>
            <Line $ls={-0.5}>36°C</Line>
            <Line $ls={-0.4} $dim>Sunny</Line>
          </Lines>
        </Weather>
        <AppSlot><WindowsIcon /></AppSlot>
        <SearchBox>
          <LensIcon />
          <SearchText>Search</SearchText>
          <DeskIcon />
        </SearchBox>
        <AppSlot><TaskViewIcon /></AppSlot>
        <AppSlot><TeamsIcon /><TeamsLetter>T</TeamsLetter></AppSlot>
        <AppSlot><FaWhatsapp size={34} color="#25d366" /><Running /></AppSlot>
        <AppSlot $active><EdgeIcon /><Running $focused /></AppSlot>
        <AppSlot><StoreIcon /></AppSlot>
        <AppSlot><ConeIcon /></AppSlot>
        <AppSlot><FolderIcon /></AppSlot>
        <AppSlot><ChromeIcon /></AppSlot>
        <AppSlot><TelegramIcon /></AppSlot>
        <AppSlot><FaSpotify size={30} color="#1ed760" /></AppSlot>
        <AppSlot><VsCodeIcon /><Running /></AppSlot>
        <AppSlot><ChromeIcon /><Photo /><Running /></AppSlot>
        <Spacer />
        <Slot $w={40}><LineIcon w={14} h={8} sw={1.9}><path d="M1 7l6-6 6 6" /></LineIcon></Slot>
        <Slot $w={40}><CloudSyncIcon /></Slot>
        <Lines $align="center" $w={56} $drop={1}>
          <Line $ls={-0.5}>ENG</Line>
          <Line $ls={0}>IN</Line>
        </Lines>
        <Slot $w={38}><WifiIcon /></Slot>
        <Slot $w={23}><VolumeIcon /></Slot>
        <Slot $w={36}><BatteryIcon /></Slot>
        <Lines $align="right" $w={90}>
          <Line $ls={-0.2}>12:04</Line>
          <Line $ls={-0.1}>27-04-2024</Line>
        </Lines>
        <Slot $w={39}><BellIcon /></Slot>
        <Slot $w={53}><CopilotWrap><CopilotColor /><Pre>PRE</Pre></CopilotWrap></Slot>
        <Slot $w={12} />
      </Taskbar>
    </Desktop>
  );
}
